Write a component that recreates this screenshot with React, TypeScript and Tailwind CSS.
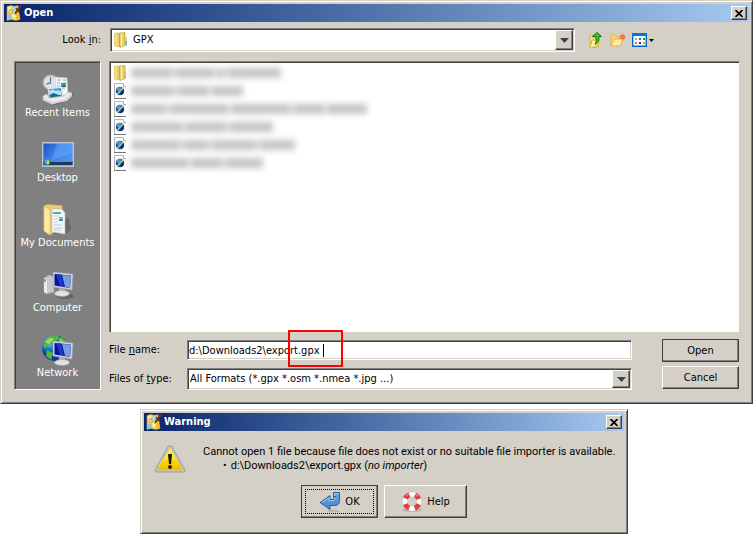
import type { ReactNode } from "react";

const raised =
    "bg-[#d4d0c8] border border-t-white border-l-white border-r-[#404040] border-b-[#404040] shadow-[inset_-1px_-1px_0_#808080]";
const sunken =
    "bg-white border border-t-[#808080] border-l-[#808080] border-r-white border-b-white shadow-[inset_1px_1px_0_#404040,inset_-1px_-1px_0_#d4d0c8]";

function AppIcon() {
    return (
        <svg width="16" height="16" viewBox="0 0 16 16" aria-hidden="true">
            <path d="M1 1.500l4-1 4 1 3-1 2 14-4 1-5-1-4 1z" fill="#f4d64a" stroke="#c89a28" strokeWidth=".6" />
            <path d="M2 2l3-1 1 6-4 2z" fill="#f8f0a0" />
            <path d="M6 2l4-1 1 5-4 1z" fill="#9fd3ef" />
            <path d="M2 10l3-1 1 5-4 1z" fill="#86c5ee" />
            <path d="M6 9l3-1 1 4-3 2z" fill="#f6efb4" />
            <path d="M10 8l3 1 1 5-4 0z" fill="#f9b928" />
            <path d="M3 9V6l2-2 1 2v3" fill="none" stroke="#d8703c" strokeWidth=".9" />
            <path d="M15 .5L9.500 8" stroke="#7a2e14" strokeWidth="2" />
            <path d="M10 3l3 4" stroke="#4b3a2a" strokeWidth="1.400" />
            <path d="M9.500 7l-1.500 3 2.500-2z" fill="#222" />
        </svg>
    );
}

function FolderIcon() {
    return (
        <svg width="14" height="16" viewBox="0 0 14 16" className="max-w-none" aria-hidden="true">
            <defs>
                <linearGradient id="folder" x1="0" x2="1">
                    <stop offset="0" stopColor="#f8e89a" />
                    <stop offset="1" stopColor="#dfc25a" />
                </linearGradient>
            </defs>
            <path d="M.5 1H6v14l-5.500-1z" fill="url(#folder)" stroke="#d8bd58" strokeWidth=".7" />
            <path d="M6 1l5-.5v13L6 15.500z" fill="url(#folder)" stroke="#c9a53c" strokeWidth=".7" />
            <path d="M5.500 2v12" stroke="#c9a944" />
            <path d="M7.500 2v12" stroke="#fff2b5" />
            <path d="M11 5l2 .5V14h-2z" fill="#e8cb62" />
            <path d="M12.200 9.500v3" stroke="#38a7e8" strokeWidth="1.400" />
        </svg>
    );
}

function GpxIcon() {
    return (
        <svg width="12" height="16" viewBox="0 0 12 16" aria-hidden="true">
            <path d="M.5.500H9l3 3v12H.500z" fill="#fafafa" />
            <path d="M.5 15V.500H9" fill="none" stroke="#b4b4b4" />
            <path d="M0 15.500h12" stroke="#777" />
            <path d="M9.500.500v3H12" fill="#fff" stroke="#aaa" />
            <circle cx="6" cy="8" r="4.200" fill="#0a4da0" />
            <path d="M2.500 7a3.500 3.500 0 0 1 5-2.500L5 9z" fill="#36a4e8" />
            <path d="M7 10l2.500-3v3a4 4 0 0 1-3 2z" fill="#062350" />
            <path d="M3.500 11L9.500 4.500" stroke="#e9c55c" strokeWidth="1.300" />
        </svg>
    );
}

function RecentIcon() {
    return (
        <svg width="32" height="32" viewBox="0 0 32 32" aria-hidden="true">
            <path d="M6 27l20-5 5-4v3l-5 6-13 4z" fill="#555" opacity=".5" />
            <circle cx="8.500" cy="8.500" r="7.200" fill="#dbe5ea" stroke="#aab9c2" strokeWidth="1.500" />
            <path d="M8.500 3v6l-4 1" fill="none" stroke="#657c8d" strokeWidth="1.300" />
            <path d="M13 3l12 1 1 17-12 1z" fill="#f7f7f7" stroke="#c4c8ca" strokeWidth=".6" />
            <path d="M15 6h4m2 0h3m-9 3h3m-3 3h3m-3 2h8" stroke="#9faab0" />
            <path d="M19 9l5-.5V13h-5z" fill="#3b9bc6" />
            <path d="M19 13l2-2 3 1v1z" fill="#3c7048" />
            <path d="M6 14l14-1 1 12-14 1z" fill="#fff" stroke="#ccd" strokeWidth=".5" />
            <path d="M7 15l12-1 1 10-12 1z" fill="#3b9be0" />
            <path d="M7 17q4-3 7 0 3-2 5 1v3H7z" fill="#b3e4fa" />
            <path d="M7.500 21l4-2 8 3 .5 2-12 1z" fill="#176d80" />
            <path d="M1 22l4-2 2 4 15-2 4-4 4 1-5 7-15 4L1 26z" fill="#ededed" stroke="#b8b8b8" strokeWidth=".7" />
            <path d="M1 22l9 4 15-3 5-4v3l-5 5-15 3-9-4z" fill="#d7d7d7" />
            <path d="M3 24l7 3 14-3" fill="none" stroke="#fff" />
        </svg>
    );
}

function DesktopIcon() {
    return (
        <svg width="32" height="32" viewBox="0 0 32 32" aria-hidden="true">
            <defs>
                <linearGradient id="desk" x2="1" y2=".5">
                    <stop offset="0" stopColor="#164fc0" />
                    <stop offset=".5" stopColor="#3f83ec" />
                    <stop offset="1" stopColor="#4c92f2" />
                </linearGradient>
            </defs>
            <path d="M.7 3.700h30.600v23.600H.700z" fill="url(#desk)" stroke="#bac6d6" strokeWidth="1.400" />
            <path d="M15 4.500h15.500V14L10 21z" fill="#8cc4ff" opacity=".25" />
            <path d="M1.500 22h29v4h-29z" fill="#26384e" />
            <path d="M8 22.500h22" stroke="#7087a5" />
            <circle cx="5" cy="23" r="3" fill="#18a5d5" />
            <path d="M3 21h2v2H3z" fill="#f37531" />
            <path d="M5 21h2v2H5z" fill="#87d949" />
            <path d="M5 23h2v2H5z" fill="#ffe04b" />
        </svg>
    );
}

function DocumentsIcon() {
    return (
        <svg width="32" height="32" viewBox="0 0 32 32" aria-hidden="true">
            <path d="M11 30l14-1 4-4-3-12z" fill="#444" opacity=".4" />
            <path d="M2 2L5 .500l15 1V22L8 31l-6-4z" fill="#edcc70" stroke="#d7b35c" strokeWidth=".7" />
            <path d="M10 5l10 0 3 4v21l-13-2z" fill="#f5f6f7" stroke="#b2b6b8" strokeWidth=".6" />
            <path d="M11 9h8" stroke="#20949d" strokeWidth="1.500" />
            <path d="M12 12h5m-5 3h4m-4 3h4m-4 3h8m-8 3h9m-9 2h7" stroke="#c3cad0" />
            <path d="M17 13h4v4h-4z" fill="#71b8de" />
            <path d="M17 17l2-2 2 2z" fill="#197087" />
            <path d="M2 2l6 4v25l-6-4z" fill="#ffe9a5" stroke="#d7b866" strokeWidth=".7" />
        </svg>
    );
}

function Monitor() {
    return (
        <>
            <path d="M17 22l6 0 0 4h-6z" fill="#aeb2b6" />
            <ellipse cx="20" cy="27.500" rx="7.500" ry="3" fill="#e1e2e3" stroke="#a6a9ad" strokeWidth=".6" />
            <path d="M11 6l20 2-1 16-19-3z" fill="#d1d3d6" stroke="#999fa5" strokeWidth=".6" />
            <path d="M12.500 8L29 9.500 28 22l-15.500-2.500z" fill="#08139d" />
            <path d="M20 9l9 .5-1 12.500-5-1z" fill="#789ddd" />
            <path d="M14 8l5 .5 3 12-4-.7z" fill="#2037c6" />
        </>
    );
}

function ComputerIcon() {
    return (
        <svg width="32" height="32" viewBox="0 0 32 32" aria-hidden="true">
            <ellipse cx="23" cy="27" rx="9" ry="3" fill="#555" opacity=".6" />
            <path d="M2 9l5-3 5 2v15l-7 2-3-3z" fill="#c6c8ca" stroke="#9fa3a5" strokeWidth=".7" />
            <path d="M2 9l3 1v15l-3-2z" fill="#ededed" />
            <path d="M3 10v3" stroke="#37ad25" strokeWidth="1.500" />
            <g transform="translate(0,-3)"><Monitor /></g>
        </svg>
    );
}

function NetworkIcon() {
    return (
        <svg width="32" height="32" viewBox="0 0 32 32" aria-hidden="true">
            <defs>
                <radialGradient id="globe" cx=".3" cy=".25">
                    <stop offset="0" stopColor="#75e3fa" />
                    <stop offset=".5" stopColor="#228ace" />
                    <stop offset="1" stopColor="#0c3e91" />
                </radialGradient>
            </defs>
            <circle cx="13" cy="14" r="13" fill="url(#globe)" />
            <path d="M9 2l6-1 3 3-5 3-1 4-5-1-3 4-3-1q1-7 8-11zM19 2l6 6-3 2-5-3zM5 16l6 3-2 7-5-4z" fill="#55b63a" />
            <path d="M3 8q5-6 9-3L7 10zm14-4l5 4-4 0z" fill="#b3ec87" opacity=".7" />
            <g transform="translate(0,1)"><Monitor /></g>
        </svg>
    );
}

function UpFolderIcon() {
    return (
        <svg width="16" height="18" viewBox="0 0 16 18" aria-hidden="true">
            <path d="M1.500 6l1-2h3l1 2h4v10l-8 1z" fill="#f5dc76" stroke="#dcb84c" />
            <path d="M2 16l2-7h8l-3 6-6 2z" fill="#fff2a3" stroke="#d8b03a" />
            <path d="M4.500 5.500L9 1.500 13.500 5.500H11c0 5-1 6-4 8 1.500-3 1.500-4 .5-8z" fill="#49bd36" stroke="#137514" />
        </svg>
    );
}

function NewFolderIcon() {
    return (
        <svg width="16" height="18" viewBox="0 0 16 18" aria-hidden="true">
            <path d="M.7 15V5l1-1h4l1 2h6v3" fill="#f3d777" stroke="#d9b85a" />
            <path d="M1 15l3-7h9l-3 7z" fill="#ffeaa0" stroke="#dcb652" />
            <path d="M12.500 2v8M8.500 6h8M10 3.500l5 5m0-5l-5 5" stroke="#f58a4a" strokeWidth=".9" />
            <circle cx="12.500" cy="6" r="2.300" fill="#ff4e27" />
            <circle cx="12.500" cy="6" r=".9" fill="#ffc779" />
        </svg>
    );
}

function ViewIcon() {
    return (
        <svg width="24" height="16" viewBox="0 0 24 16" aria-hidden="true">
            <path d="M.7 1.700h13.600v12.600H.700z" fill="#fff" stroke="#0865c9" strokeWidth="1.400" />
            <path d="M0 1h15v3H0z" fill="#0873dc" />
            <path d="M3 6h2v2H3z" fill="#a5abb5" />
            <path d="M7 6h2v2H7z" fill="#246edc" />
            <path d="M11 6h2v2h-2z" fill="#249632" />
            <path d="M3 10h2v2H3z" fill="#f46b43" />
            <path d="M7 10h2v2H7z" fill="#123d88" />
            <path d="M11 10h2v2h-2z" fill="#d69c16" />
            <path d="M17 7h5l-2.500 3z" fill="#000" />
        </svg>
    );
}

function WarningIcon() {
    return (
        <svg width="32" height="28" viewBox="0 0 32 28" className="shrink-0" aria-hidden="true">
            <defs>
                <linearGradient id="warn" x2="0" y2="1">
                    <stop offset="0" stopColor="#fff04b" />
                    <stop offset=".5" stopColor="#ffd900" />
                    <stop offset="1" stopColor="#eebd00" />
                </linearGradient>
            </defs>
            <path d="M14 1.500q2-1.500 4 0L31 25q.5 2-1.500 2h-27Q.500 27 1 25z" fill="#c2c2bc" stroke="#93938f" strokeWidth=".8" />
            <path d="M16 3L29 25H3z" fill="url(#warn)" stroke="#f7d62d" strokeWidth=".5" />
            <path d="M9 16l7-12 7 12q-7-3-14 0z" fill="#fff89b" opacity=".3" />
            <path d="M14 9h4l-1 10h-2z" fill="#151515" />
            <circle cx="16" cy="22" r="1.900" fill="#151515" />
        </svg>
    );
}

function EnterIcon() {
    return (
        <svg width="22" height="22" viewBox="0 0 22 22" aria-hidden="true">
            <defs>
                <linearGradient id="enter" x2="0" y2="1">
                    <stop offset="0" stopColor="#6ca8e3" />
                    <stop offset="1" stopColor="#4382c6" />
                </linearGradient>
            </defs>
            <ellipse cx="14" cy="20" rx="6" ry="1.500" fill="#bab6ae" />
            <path d="M14.500 1.500h6v8q0 5-5 5H11v4L1 11.500 11 4.500v4h3.500z" fill="url(#enter)" stroke="#285f9f" />
            <path d="M15.500 2.500h4M3 11.500l7-5v3h4q1.500 0 1.500-2v-5" fill="none" stroke="#9cc7ee" />
            <path d="M14.500 5.500h2.500" stroke="#285f9f" />
        </svg>
    );
}

function LifebuoyIcon() {
    return (
        <svg width="22" height="22" viewBox="0 0 22 22" aria-hidden="true">
            <ellipse cx="11" cy="19" rx="10" ry="2" fill="#b8b4ac" />
            <circle cx="11" cy="10.500" r="7.200" fill="none" stroke="#b5b5b5" strokeWidth="6" />
            <circle cx="11" cy="10.500" r="7.200" fill="none" stroke="#fafafa" strokeWidth="5" />
            <circle cx="11" cy="10.500" r="7.200" fill="none" stroke="#e33e3e" strokeWidth="5" strokeDasharray="5.650 5.660" strokeDashoffset="-2.830" />
            <path d="M5 5q6-5 12 0" fill="none" stroke="#fff" opacity=".5" />
        </svg>
    );
}

function TitleBar({ title }: { title: string }) {
    return (
        <header className="flex h-[18px] items-center gap-[2px] bg-linear-to-r from-[#0a246a] to-[#a6caf0] px-[2px] text-white">
            <AppIcon />
            <h2 className="flex-1 font-bold">{title}</h2>
            <button type="button" aria-label="Close" className={`flex h-[14px] w-4 items-center justify-center ${raised}`}>
                <svg width="8" height="7" viewBox="0 0 8 7" aria-hidden="true">
                    <path d="M.5 0l7 7m0-7l-7 7" stroke="#000" strokeWidth="1.700" />
                </svg>
            </button>
        </header>
    );
}

function Dialog({ title, children }: { title: string; children: ReactNode }) {
    return (
        <section
            aria-label={title}
            className="border border-t-[#d4d0c8] border-l-[#d4d0c8] border-r-[#404040] border-b-[#404040] bg-[#d4d0c8] p-[3px] shadow-[inset_1px_1px_0_#fff,inset_-1px_-1px_0_#808080]"
        >
            <TitleBar title={title} />
            {children}
        </section>
    );
}

function DropArrow() {
    return (
        <span className={`pointer-events-none absolute inset-y-[2px] right-[2px] flex w-[18px] items-center justify-center ${raised}`}>
            <svg width="9" height="5" viewBox="0 0 9 5" aria-hidden="true">
                <path d="M0 0h9L4.500 5z" fill="#404040" />
            </svg>
        </span>
    );
}

const places = [
    { name: "Recent Items", icon: <RecentIcon /> },
    { name: "Desktop", icon: <DesktopIcon /> },
    { name: "My Documents", icon: <DocumentsIcon /> },
    { name: "Computer", icon: <ComputerIcon /> },
    { name: "Network", icon: <NetworkIcon /> },
];

// word widths of the obscured file names
const files = [
    [42, 40, 8, 54],
    [44, 32, 32],
    [36, 60, 60, 32, 40],
    [52, 42, 44],
    [50, 26, 46, 36],
    [58, 32, 38],
];

export default function App() {
    return (
        <main className="min-h-screen bg-white font-['DejaVu_Sans_Condensed','DejaVu_Sans',sans-serif] text-[11px] leading-[14px] text-black">
            <Dialog title="Open">
                <div className="px-[10px] pt-[6px] pb-[10px]">
                    <div className="flex items-center">
                        <label htmlFor="look-in" className="w-24 pr-[9px] text-right">
                            Look <u>i</u>n:
                        </label>
                        <div className="relative flex-1">
                            <select id="look-in" className={`block h-6 w-full appearance-none pl-[22px] outline-none ${sunken}`}>
                                <option>GPX</option>
                            </select>
                            <span className="pointer-events-none absolute top-1 left-1">
                                <FolderIcon />
                            </span>
                            <DropArrow />
                        </div>
                        <div className="flex w-[164px] items-center gap-[6px] pl-[13px]">
                            <button type="button" aria-label="Up One Level"><UpFolderIcon /></button>
                            <button type="button" aria-label="Create New Folder"><NewFolderIcon /></button>
                            <button type="button" aria-label="View Menu"><ViewIcon /></button>
                        </div>
                    </div>

                    <div className="mt-[9px] flex gap-2">
                        <nav className="flex w-[87px] shrink-0 flex-col border border-t-[#808080] border-l-[#808080] border-r-white border-b-white bg-[#808080] pt-[2px] text-white shadow-[inset_1px_1px_0_#404040]">
                            {places.map((place) => (
                                <button key={place.name} type="button" className="flex h-[65px] flex-col items-center pt-[10px] whitespace-nowrap">
                                    {place.icon}
                                    {place.name}
                                </button>
                            ))}
                        </nav>

                        <div className="flex min-w-0 flex-1 flex-col">
                            <ul className="flex-1 border-t border-l border-[#808080] bg-white pt-[2px] pl-1 shadow-[inset_1px_1px_0_#404040]">
                                {files.map((words, i) => (
                                    <li key={i} className="flex h-[18px] items-center gap-[5px]">
                                        <span className="w-3 overflow-hidden">{i === 0 ? <FolderIcon /> : <GpxIcon />}</span>
                                        <span className="flex gap-[2px] blur-[3px]">
                                            {words.map((width, j) => (
                                                <span key={j} className="h-[10px] bg-[#c4c4c4]" style={{ width }} />
                                            ))}
                                        </span>
                                    </li>
                                ))}
                            </ul>

                            <div className="mt-[7px] flex gap-[30px]">
                                <div className="flex flex-1 flex-col gap-2 pt-px">
                                    <div className="flex items-center">
                                        <label htmlFor="file-name" className="w-[78px]">
                                            File <u>n</u>ame:
                                        </label>
                                        <div className="relative flex-1">
                                            <input
                                                id="file-name"
                                                type="text"
                                                defaultValue="d:\Downloads2\export.gpx "
                                                className={`block h-5 w-full px-px outline-none ${sunken}`}
                                            />
                                            <span className="pointer-events-none absolute top-1 left-[136px] h-[13px] w-px bg-black" />
                                            <span className="pointer-events-none absolute -top-[10px] left-[101px] h-[37px] w-[55px] border-2 border-[#f00]" />
                                        </div>
                                    </div>
                                    <div className="flex items-center">
                                        <label htmlFor="file-type" className="w-[78px]">
                                            Files of <u>t</u>ype:
                                        </label>
                                        <div className="relative flex-1">
                                            <select id="file-type" className={`block h-[22px] w-full appearance-none pl-[2px] outline-none ${sunken}`}>
                                                <option>All Formats (*.gpx *.osm *.nmea *.jpg ...)</option>
                                            </select>
                                            <DropArrow />
                                        </div>
                                    </div>
                                </div>
                                <div className="flex w-[77px] flex-col gap-1">
                                    <button type="button" className={`h-[23px] outline -outline-offset-1 outline-[#404040] ${raised}`}>Open</button>
                                    <button type="button" className={`h-[23px] ${raised}`}>Cancel</button>
                                </div>
                            </div>
                        </div>
                    </div>
                </div>
            </Dialog>

            <div className="pt-[5px] pr-[125px] pl-[140px]">
                <Dialog title="Warning">
                    <div className="px-[10px] pt-[14px] pb-3">
                        <div className="flex gap-[17px]">
                            <WarningIcon />
                            <div className="font-['Roboto',sans-serif] whitespace-nowrap">
                                <p>Cannot open 1 file because file does not exist or no suitable file importer is available.</p>
                                <ul className="pl-5">
                                    <li className="flex gap-1">
                                        <span>•</span>
                                        <span>
                                            d:\Downloads2\export.gpx (<em>no importer</em>)
                                        </span>
                                    </li>
                                </ul>
                            </div>
                        </div>
                        <div className="mt-3 flex justify-center gap-[6px]">
                            <button type="button" className={`relative flex h-[33px] w-[77px] items-center justify-center gap-1 outline -outline-offset-1 outline-[#404040] ${raised}`}>
                                <EnterIcon />
                                OK
                                <span className="pointer-events-none absolute inset-[3px] border border-dotted border-black" />
                            </button>
                            <button type="button" className={`flex h-[33px] w-[83px] items-center justify-center gap-1 ${raised}`}>
                                <LifebuoyIcon />
                                Help
                            </button>
                        </div>
                    </div>
                </Dialog>
            </div>
        </main>
    );
}
